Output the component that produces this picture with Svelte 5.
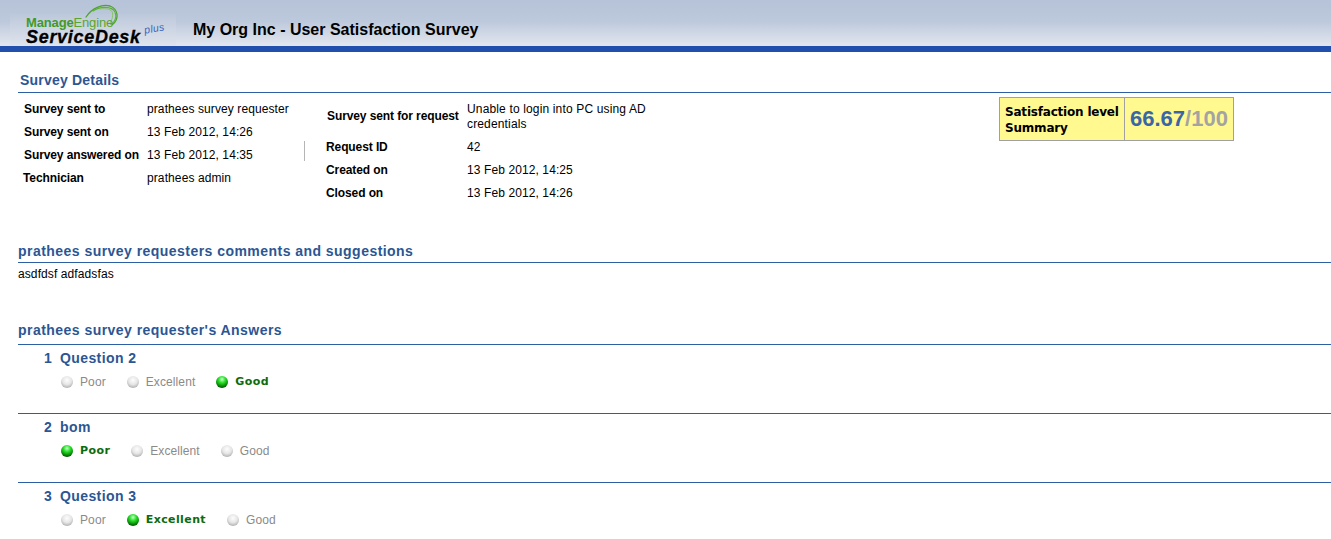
<script>
  const sent = [
    ['Survey sent to', 'prathees survey requester'],
    ['Survey sent on', '13 Feb 2012, 14:26'],
    ['Survey answered on', '13 Feb 2012, 14:35'],
    ['Technician', 'prathees admin']
  ];
  const req = [
    ['Request ID', '42'],
    ['Created on', '13 Feb 2012, 14:25'],
    ['Closed on', '13 Feb 2012, 14:26']
  ];
  const questions = [
    { n: 1, q: 'Question 2', opts: ['Poor', 'Excellent', 'Good'], sel: 'Good' },
    { n: 2, q: 'bom', opts: ['Poor', 'Excellent', 'Good'], sel: 'Poor' },
    { n: 3, q: 'Question 3', opts: ['Poor', 'Excellent', 'Good'], sel: 'Excellent' }
  ];
</script>

<header class="top">
  <div class="logo">
    <svg width="166" height="32" viewBox="0 0 166 32" class="swoosh">
      <g fill="none" stroke-linecap="round">
        <path d="M76 3 C82 -6 92 -10 100 -8 C108 -5 110 5 102 11" stroke="#4fa32c" stroke-width="1.3"/>
        <path d="M83 -3 C90 -8 102 -8 105 -2 C107 3 105 8 101 10.5" stroke="#5fb03a" stroke-width="1.1"/>
        <path d="M90 -5 C96 -6 102 -5 102.500 -1 C103 3 102 6 100 9" stroke="#8cc46c" stroke-width="1"/>
      </g>
    </svg>
    <div class="me"><span class="mg">Manage</span><span class="eng">Engine</span></div>
    <div class="sd">ServiceDesk</div>
    <div class="plus">plus</div>
  </div>
  <h1>My Org Inc - User Satisfaction Survey</h1>
</header>
<div class="rule-bar"></div>

<main>
  <h2 class="first">Survey Details</h2>
  <section class="details">
    <div class="col-a">
      {#each sent as [k, v], i}
        <div class="row"><b class:tech={i === 3}>{k}</b><span>{v}</span></div>
      {/each}
    </div>
    <div class="sep-wrap"><div class="sep"></div></div>
    <div class="col-b">
      <div class="row tall"><b class="sf">Survey sent for request</b><span>Unable to login into PC using AD credentials</span></div>
      {#each req as [k, v]}
        <div class="row"><b>{k}</b><span>{v}</span></div>
      {/each}
    </div>
    <div class="score">
      <div class="sum">Satisfaction level Summary</div>
      <div class="val"><span class="num">66.67</span><span class="den">/100</span></div>
    </div>
  </section>

  <h2 class="comments">prathees survey requesters comments and suggestions</h2>
  <p class="text">asdfdsf adfadsfas</p>

  <h2 class="answers">prathees survey requester's Answers</h2>
  {#each questions as q, i}
    <div class="q" class:last={i === 2}>
      <div class="qt"><span class="qn">{q.n}</span><span>{q.q}</span></div>
      <div class="opts">
        {#each q.opts as o}
          <span class="opt" class:on={o === q.sel}><i class="dot"></i>{o}</span>
        {/each}
      </div>
    </div>
  {/each}
</main>

<style>
  :global(body) { margin: 0; background: #fff; font-family: "Liberation Sans", Arial, sans-serif; font-size: 12px; color: #000; overflow: hidden; }
  .top { height: 46px; background: linear-gradient(#b6c3d8 0%, #bcc8db 45%, #e3e7ef 100%); display: flex; align-items: flex-end; padding-left: 10px; box-sizing: border-box; }
  .logo { position: relative; width: 166px; height: 32px; background: linear-gradient(#bcc8db, #dfe4ed); flex: none; }
  .swoosh { position: absolute; left: 0; top: 0; overflow: visible; }
  .me { position: absolute; left: 16px; top: 3px; font-size: 13px; font-weight: bold; letter-spacing: -0.15px; line-height: 12px; white-space: nowrap; }
  .mg { color: #3f9a2a; }
  .eng { color: #5aa52f; font-weight: normal; }
  .sd { position: absolute; left: 16px; top: 15px; font: italic bold 18px/16px "Liberation Sans", sans-serif; color: #000; letter-spacing: 0.7px; -webkit-text-stroke: 0.3px #000; white-space: nowrap; }
  .plus { position: absolute; left: 134px; top: 8px; font: italic 10.5px/12px "Liberation Sans", sans-serif; color: #3f64ba; letter-spacing: 0.3px; transform: rotate(-10deg); }
  h1 { margin: 0 0 7px 17px; font-size: 16px; line-height: 18px; font-weight: bold; }
  .rule-bar { height: 6px; background: #214fae; }
  main { padding-left: 18px; }
  h2 { margin: 0; font-size: 14px; line-height: 16px; font-weight: bold; color: #2c5693; letter-spacing: 0.46px; border-bottom: 1px solid #2c5fa3; padding-bottom: 3px; }
  h2.first { margin-top: 20px; padding-left: 2px; padding-bottom: 4px; letter-spacing: 0.2px; }
  .details { display: flex; height: 150px; align-items: flex-start; }
  .row { display: flex; align-items: center; height: 23px; }
  .row b { flex: none; letter-spacing: -0.1px; }
  .row span { letter-spacing: 0.1px; }
  .col-a { padding: 4px 0 0 6px; width: 286px; flex: none; box-sizing: border-box; }
  .col-a .row b { width: 123px; }
  .col-a b.tech { margin-left: -1px; width: 124px; }
  .sep-wrap { padding-top: 48px; width: 1px; flex: none; }
  .sep { width: 1px; height: 20px; background: #b5b5b5; }
  .col-b { padding: 8px 0 0 21px; width: 345px; flex: none; box-sizing: border-box; }
  .col-b .row b { width: 141px; }
  .col-b .row span { width: 190px; }
  .col-b .tall { height: 30px; margin-bottom: 4px; line-height: 15px; }
  .col-b .tall b { margin-left: 1px; width: 140px; }
  .col-b .tall span { padding-top: 2px; letter-spacing: 0.15px; }
  .score { display: flex; width: 235px; height: 44px; margin: 4px 0 0 349px; border: 1px solid #a0a0a0; background: #fff990; box-sizing: border-box; flex: none; }
  .sum { width: 125px; flex: none; border-right: 1px solid #a0a0a0; padding: 6px 0 0 5px; box-sizing: border-box; font: bold 12px/16px "DejaVu Sans", Verdana, sans-serif; letter-spacing: -0.2px; }
  .val { font-size: 22px; font-weight: bold; line-height: 42px; padding-left: 5px; white-space: nowrap; }
  .num { color: #3a66a8; }
  .den { color: #a3a3a3; }
  .text { margin: 4px 0 0; line-height: 15px; height: 15px; letter-spacing: 0.1px; }
  h2.answers { margin-top: 40px; padding-bottom: 6px; }
  .q { border-bottom: 1px solid #2c5fa3; height: 69px; box-sizing: border-box; }
  .q.last { border-bottom: 0; }
  .qt { padding: 5px 0 0 26px; font-size: 14px; line-height: 16px; font-weight: bold; color: #2c5693; display: flex; letter-spacing: 0.4px; }
  .qn { width: 16px; }
  .opts { display: flex; padding: 8px 0 0 43px; gap: 21px; color: #8a8a8a; line-height: 14px; letter-spacing: 0.1px; }
  .opt { display: flex; align-items: center; }
  .opt.on { color: #0c6b0c; font: bold 11px/14px "DejaVu Sans", Verdana, sans-serif; letter-spacing: 0.4px; padding-top: 1px; }
  .dot { width: 12px; height: 12px; border-radius: 50%; margin-right: 7px; background: radial-gradient(circle at 50% 35%, #fdfdfd 0%, #e6e6e6 45%, #b0b0b0 80%, #8f8f8f 100%); }
  .on .dot { margin-top: -1px; background: radial-gradient(circle at 50% 28%, #c8ffc8 0%, #2be02b 32%, #0a960a 60%, #012001 95%); }
</style>
